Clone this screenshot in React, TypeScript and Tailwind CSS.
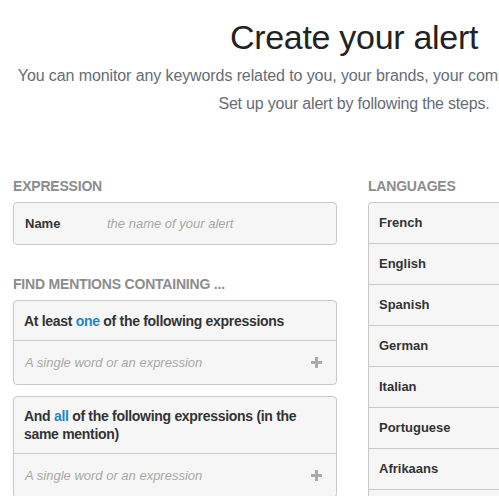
const languages = [
  "French",
  "English",
  "Spanish",
  "German",
  "Italian",
  "Portuguese",
  "Afrikaans",
  "Albanian",
];

function SectionLabel({ children }: { children: React.ReactNode }) {
  return (
    <h2 className="mb-[6px] text-[14px] leading-[20px] font-bold uppercase tracking-[-0.2px] text-[#8c8c8c]">
      {children}
    </h2>
  );
}

function PlusIcon() {
  return (
    <svg width="11" height="11" viewBox="0 0 11 11" className="text-[#ababab]">
      <rect x="4" y="0" width="3" height="11" fill="currentColor" />
      <rect x="0" y="4" width="11" height="3" fill="currentColor" />
    </svg>
  );
}

function ExpressionCard({ title }: { title: React.ReactNode }) {
  return (
    <div className="rounded-[4px] border border-[#c9c9c9] bg-[#f6f6f6]">
      <div className="flex min-h-[40px] items-center border-b border-[#c9c9c9] px-[10px] py-[10px] text-[14px] leading-[18px] font-bold tracking-[-0.3px] text-[#333]">
        <p>{title}</p>
      </div>
      <div className="flex h-[43px] items-center justify-between pl-[11px] pr-[14px]">
        <span className="text-[13px] italic text-[#a8a8a8]">A single word or an expression</span>
        <PlusIcon />
      </div>
    </div>
  );
}

export default function App() {
  return (
    <div className="h-screen w-full overflow-hidden bg-white font-['Liberation_Sans',Arial,sans-serif]">
      <div className="w-[708px] px-[13px]">
        <header className="pt-[17px] text-center">
          <h1 className="text-[34px] leading-[40px] tracking-[-0.3px] text-[#222]">Create your alert</h1>
          <div className="mt-[5px] text-[16px] leading-[28px] text-[#646d74]">
            <p className="tracking-[-0.1px]">
              You can monitor any keywords related to you, your brands, your competitors, your industry, etc...
            </p>
            <p className="tracking-[-0.2px]">Set up your alert by following the steps.</p>
          </div>
        </header>

        <div className="mt-[58px] grid grid-cols-[324px_324px] gap-[31px]">
          <section>
            <SectionLabel>Expression</SectionLabel>
            <div className="flex h-[43px] items-center rounded-[4px] border border-[#c9c9c9] bg-[#f6f6f6] px-[11px] text-[13px]">
              <span className="w-[82px] font-bold text-[#333]">Name</span>
              <span className="italic text-[#a8a8a8]">the name of your alert</span>
            </div>

            <div className="mt-[29px]">
              <SectionLabel>Find mentions containing ...</SectionLabel>
              <div className="flex flex-col gap-[11px]">
                <ExpressionCard
                  title={
                    <>
                      At least <span className="text-[#1f88c2]">one</span> of the following expressions
                    </>
                  }
                />
                <ExpressionCard
                  title={
                    <>
                      And <span className="text-[#1f88c2]">all</span> of the following expressions (in the same mention)
                    </>
                  }
                />
              </div>
            </div>
          </section>

          <section>
            <SectionLabel>Languages</SectionLabel>
            <ul className="rounded-t-[4px] border-x border-t border-[#c9c9c9] bg-[#f6f6f6]">
              {languages.map((lang) => (
                <li
                  key={lang}
                  className="flex h-[41px] items-center border-b border-[#c9c9c9] px-[10px] text-[13px] font-bold text-[#333]"
                >
                  {lang}
                </li>
              ))}
            </ul>
          </section>
        </div>
      </div>
    </div>
  );
}
